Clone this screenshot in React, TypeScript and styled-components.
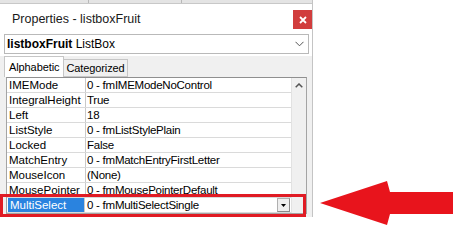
import styled, { createGlobalStyle } from 'styled-components';

const Global = createGlobalStyle`
  html, body {
    margin: 0;
    padding: 0;
    background: #ffffff;
  }
  body {
    width: 474px;
    height: 238px;
    overflow: hidden;
    font-family: 'Liberation Sans', Arial, sans-serif;
    color: #000;
  }
`;

const Page = styled.div`
  display: flex;
  align-items: flex-start;
`;

const Window = styled.div`
  position: relative;
  width: 313px;
  height: 217px;
  box-sizing: border-box;
  display: flex;
  flex-direction: column;
  background: #f0f0f0;
  border-right: 1px solid #c4c4c4;
`;

const TopEdge = styled.div`
  height: 3px;
  background: #e4e4e4;
  border-bottom: 1px solid #c8c8c8;
  display: flex;
`;

const TopSep = styled.div<{ $w: number }>`
  width: ${(p) => p.$w}px;
  border-right: 1px solid #b8b8b8;
`;

const TitleBar = styled.div`
  height: 27px;
  background: #ffffff;
  display: flex;
  align-items: flex-start;
  justify-content: space-between;
  padding: 0 0 0 12px;
`;

const Title = styled.div`
  font-size: 12.5px;
  line-height: 16px;
  margin-top: 7px;
  color: #1a1a1a;
`;

const CloseButton = styled.div`
  width: 19px;
  height: 19px;
  margin-top: 6px;
  background: #d13d3d;
  display: flex;
  align-items: center;
  justify-content: center;
`;

const ComboArea = styled.div`
  background: #ffffff;
  padding: 3px 3px 2px 4px;
`;

const Combo = styled.div`
  height: 20px;
  box-sizing: border-box;
  border: 1px solid #b9b9b9;
  background: #fff;
  display: flex;
  align-items: center;
  justify-content: space-between;
  padding: 0 4px 0 2px;
  font-size: 12px;
`;

const TabsRow = styled.div`
  height: 21px;
  display: flex;
  align-items: flex-end;
  padding-left: 4px;
  position: relative;
  z-index: 1;
`;

const Tab = styled.div<{ $active?: boolean }>`
  box-sizing: border-box;
  height: ${(p) => (p.$active ? 21 : 18)}px;
  padding: 0 ${(p) => (p.$active ? 4 : 2)}px;
  background: ${(p) => (p.$active ? '#ffffff' : '#f0f0f0')};
  border: 1px solid #c6c6c6;
  border-bottom: ${(p) => (p.$active ? 'none' : '1px solid #c6c6c6')};
  border-left: ${(p) => (p.$active ? '1px solid #c6c6c6' : 'none')};
  font-size: 11px;
  letter-spacing: -0.1px;
  display: flex;
  align-items: center;
`;

const Grid = styled.div`
  position: relative;
  margin-left: 6px;
  width: 301px;
  box-sizing: border-box;
  border: 1px solid #a4a4a4;
  border-top-color: #8f8f8f;
  display: flex;
  background: #ffffff;
`;

const Rows = styled.div`
  flex: 1;
  display: flex;
  flex-direction: column;
`;

const Row = styled.div`
  height: 15px;
  box-sizing: border-box;
  display: grid;
  grid-template-columns: 79px 1fr;
  border-bottom: 1px solid #dadada;
  font-size: 11.5px;
  line-height: 14px;
`;

const NameCell = styled.div<{ $selected?: boolean }>`
  border-right: 1px solid #c9c9c9;
  padding-left: 2px;
  white-space: nowrap;
  overflow: hidden;
  background: ${(p) => (p.$selected ? '#2a83df' : 'transparent')};
  color: ${(p) => (p.$selected ? '#ffffff' : '#000')};
  margin: ${(p) => (p.$selected ? '0 1px 0 1px' : '0')};
`;

const ValueCell = styled.div`
  padding-left: 1px;
  white-space: nowrap;
  overflow: hidden;
  display: flex;
  justify-content: space-between;
  letter-spacing: -0.25px;
`;

const DropButton = styled.div`
  width: 13px;
  height: 14px;
  box-sizing: border-box;
  background: #eeeeee;
  border: 1px solid #b0b0b0;
  border-right-color: #8a8a8a;
  border-bottom-color: #8a8a8a;
  display: flex;
  align-items: center;
  justify-content: center;
  margin-right: 1px;
`;

const Scrollbar = styled.div`
  width: 15px;
  background: #f0f0f0;
  border-left: 1px solid #e2e2e2;
  display: flex;
  justify-content: center;
  padding-top: 5px;
  box-sizing: border-box;
`;

const Highlight = styled.div`
  position: absolute;
  left: -7px;
  top: 116px;
  width: 306px;
  height: 23px;
  box-sizing: border-box;
  border: 3px solid #e01b24;
  pointer-events: none;
`;

const ArrowWrap = styled.div`
  margin-left: 7px;
  margin-top: 180px;
  display: flex;
`;

const props: [string, string][] = [
  ['IMEMode', '0 - fmIMEModeNoControl'],
  ['IntegralHeight', 'True'],
  ['Left', '18'],
  ['ListStyle', '0 - fmListStylePlain'],
  ['Locked', 'False'],
  ['MatchEntry', '0 - fmMatchEntryFirstLetter'],
  ['MouseIcon', '(None)'],
  ['MousePointer', '0 - fmMousePointerDefault'],
];

export default function App() {
  return (
    <Page>
      <Global />
      <Window>
        <TopEdge>
          <TopSep $w={88} />
          <TopSep $w={92} />
        </TopEdge>
        <TitleBar>
          <Title>Properties - listboxFruit</Title>
          <CloseButton>
            <svg width="8" height="8" viewBox="0 0 8 8">
              <path d="M1 1 L7 7 M7 1 L1 7" stroke="#fff" strokeWidth="1.8" />
            </svg>
          </CloseButton>
        </TitleBar>
        <ComboArea>
          <Combo>
            <span>
              <b>listboxFruit</b> ListBox
            </span>
            <svg width="9" height="6" viewBox="0 0 9 6">
              <path d="M0.5 0.8 L4.5 4.8 L8.5 0.8" stroke="#555" strokeWidth="1" fill="none" />
            </svg>
          </Combo>
        </ComboArea>
        <TabsRow>
          <Tab $active>Alphabetic</Tab>
          <Tab>Categorized</Tab>
        </TabsRow>
        <Grid>
          <Rows>
            {props.map(([name, value]) => (
              <Row key={name}>
                <NameCell>{name}</NameCell>
                <ValueCell>{value}</ValueCell>
              </Row>
            ))}
            <Row>
              <NameCell $selected>MultiSelect</NameCell>
              <ValueCell>
                <span>0 - fmMultiSelectSingle</span>
                <DropButton>
                  <svg width="5" height="3" viewBox="0 0 5 3">
                    <path d="M0 0 L5 0 L2.5 3 Z" fill="#000" />
                  </svg>
                </DropButton>
              </ValueCell>
            </Row>
          </Rows>
          <Scrollbar>
            <svg width="8" height="5" viewBox="0 0 8 5">
              <path d="M0.7 4.3 L4 1 L7.3 4.3" stroke="#555" strokeWidth="1.5" fill="none" />
            </svg>
          </Scrollbar>
          <Highlight />
        </Grid>
      </Window>
      <ArrowWrap>
        <svg width="136" height="47" viewBox="0 0 136 47">
          <polygon points="0,23 67,1 70,12 133,12 133,34 70,34 67,45" fill="#e8141c" />
        </svg>
      </ArrowWrap>
    </Page>
  );
}
